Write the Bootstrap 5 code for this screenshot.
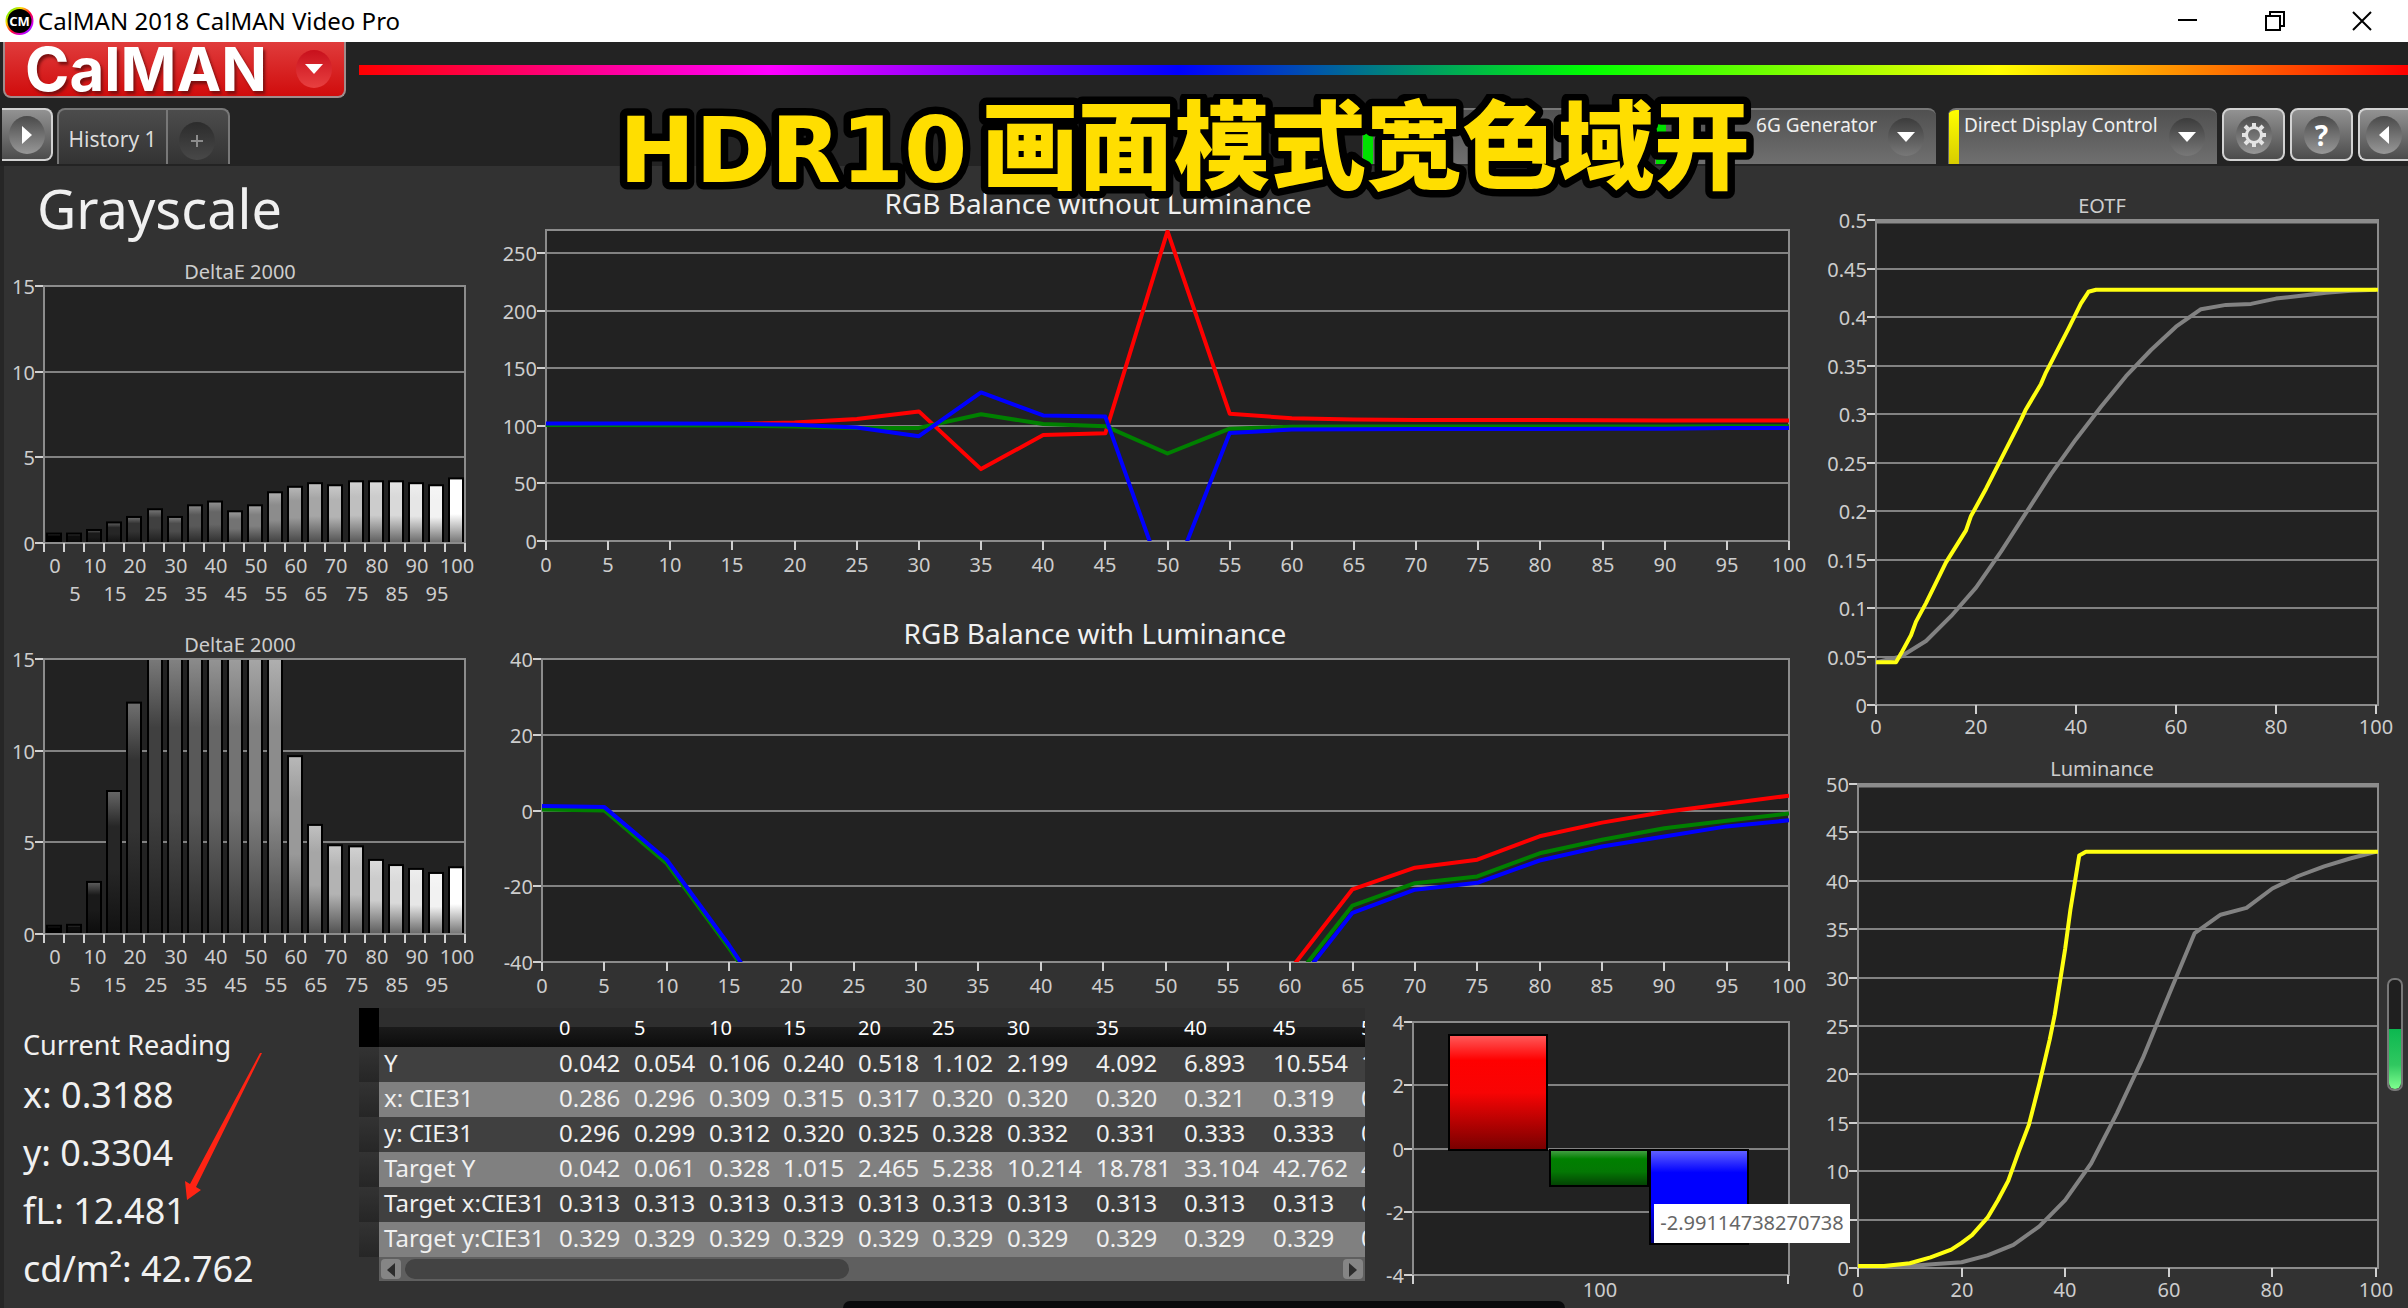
<!DOCTYPE html>
<html lang="en">
<head>
<meta charset="utf-8">
<meta name="viewport" content="width=device-width, initial-scale=1">
<title>CalMAN 2018 CalMAN Video Pro</title>
<link rel="stylesheet" href="https://cdn.jsdelivr.net/npm/bootstrap@5.3.0/dist/css/bootstrap.min.css">
<style>
  body { background: #323232; color: #f0f0f0; font-family: "Noto Sans", "Open Sans", sans-serif; overflow-x: hidden; }
  svg { display: block; }
  .titlebar { height: 42px; background: #fff; color: #000; font-size: 24px; line-height: 42px; padding: 0 3px 0 5px; }
  .titlebar button { width: 87px; height: 42px; border: 0; background: none; padding: 0; }
  .app-head { background: #232323; height: 124px; position: relative; }
  .logo-btn { width: 343px; height: 56px; margin-left: 3px; padding: 0 12px 0 20px; border: 2px solid #a08c8c; border-top: 0; border-radius: 0 0 8px 8px; background: linear-gradient(#e03c3c, #d00c0c); color: #fff; }
  .logo-word { font: 700 60px/50px Inter, sans-serif; text-shadow: 2px 3px 3px #7a1010; }
  .spectrum { height: 10px; margin: 23px 0 0 13px; background: linear-gradient(90deg, #f00, #f0f, #00f, #0f0, #ff0, #f00); }
  .tool-row { margin-top: 10px; }
  .round-ico { width: 36px; height: 38px; border-radius: 50%; background: linear-gradient(#3c3c3c, #787878); flex: none; }
  .logo-btn .round-ico { background: linear-gradient(#c8101c, #e84040); }
  .sq-btn { width: 63px; height: 53px; border: 2px solid #d2d2d2; border-radius: 8px; background: linear-gradient(#929292, #4c4c4c); padding: 0; margin-left: 5px; }
  .sq-btn .round-ico { background: linear-gradient(#4a4a4a, #989898); }
  .edge-l { width: 51px; margin-left: 2px; border-left: 0; border-radius: 0 8px 8px 0; }
  .edge-r { width: 50px; border-right: 0; border-radius: 8px 0 0 8px; }
  .hist { height: 56px; border: 2px solid #787878; border-bottom: 0; border-radius: 8px 8px 0 0; background: linear-gradient(#4c4c4c, #333); margin-left: 4px; color: #dcdcdc; font-size: 21px; }
  .hist button { background: none; border: 0; color: inherit; padding: 0; height: 54px; }
  .hist .tab-name { width: 109px; border-right: 2px solid #787878; padding-top: 6px; }
  .hist .tab-add { width: 60px; padding: 8px 0 0 11px; }
  .tab-add .round-ico { background: linear-gradient(#2c2c2c, #484848); }
  .device { height: 56px; width: 281px; border: 0; border-top: 2px solid #777; border-radius: 8px 8px 0 0; background: linear-gradient(#505050, #707070); color: #f0f0f0; font-size: 19px; line-height: 26px; padding: 2px 12px 0 6px; overflow: hidden; }
  .device + .device { margin-left: 12px; }
  .device::before { content: ""; width: 10px; height: 54px; margin: -2px 5px 0 -5px; background: #00e000; flex: none; }
  .device.direct { width: 269px; }
  .device.direct::before { background: linear-gradient(#ff0, #d8cc00); }
  .device .round-ico { margin: 6px 0 0 11px; }
  .caption { position: absolute; left: 610px; top: 52px; width: 1160px; height: 112px; z-index: 5; pointer-events: none; }
  .cap-text { fill: #ffde00; stroke: #000; stroke-width: 15px; stroke-linejoin: round; paint-order: stroke fill; font-weight: 900; }
  .cap-latin { font-family: "DejaVu Sans", sans-serif; font-size: 91px; }
  .cap-han { font-family: "Noto Sans CJK SC", sans-serif; font-size: 96px; }
  .workspace { display: grid; grid-template-columns: 1820fr 588fr; box-shadow: inset 4px 0 #262626; }
  .upper { display: grid; grid-template-columns: 490fr 1330fr; }
  .lower { display: grid; grid-template-columns: 359fr 1006fr 455fr; }
  .workspace > *, .upper > *, .lower > * { min-width: 0; }
  .workspace svg { width: 100%; height: auto; overflow: visible; }
  .page-name { height: 84px; font-size: 54px; line-height: 84px; padding-left: 37px; font-weight: 400; margin: 0; }
  .readings { padding: 24px 0 0 23px; font-size: 36px; line-height: 58px; position: relative; }
  .readings h2 { font-size: 27px; line-height: 42px; margin: 0; font-weight: 400; }
  .readings svg.pointer { position: absolute; left: 180px; top: 50px; width: 90px; height: 155px; }
  .grid-wrap { margin-top: 8px; overflow: hidden; }
  .cie { table-layout: fixed; width: 1090px; border-collapse: collapse; font-size: 24px; line-height: 32px; white-space: nowrap; }
  .cie th, .cie td { padding: 0 0 3px 5px; font-weight: 400; height: 35px; }
  .cie thead th { height: 39px; padding-bottom: 0; font-size: 20px; background: linear-gradient(#2e2e2e 50%, #1a1a1a 50%, #0c0c0c); color: #fff; }
  .cie tbody tr { background: #404040; }
  .cie tbody tr:nth-child(even) { background: #808080; }
  .cie .sel { background: linear-gradient(#333, #262626); }
  .cie thead .sel { background: #000; }
  .hscroll { height: 24px; margin-left: 20px; background: #5f5f5f; padding: 2px; }
  .hscroll button { width: 20px; height: 20px; border: 0; border-radius: 4px; background: #858585; padding: 4px 6px; }
  .hscroll .thumb { width: 444px; margin-left: 4px; border-radius: 10px; background: #434343; }
  .lbl { fill: #cdcdcd; font-size: 20px; }
  .big { fill: #f0f0f0; font-size: 28px; }
  .val-tip { position: absolute; right: -30px; top: 204px; width: 196px; height: 39px; background: #fff; color: #666; font-size: 20px; line-height: 38px; text-align: center; z-index: 3; }
  .dock { position: absolute; left: 35%; width: 30%; bottom: 0; height: 7px; background: #0a0a0c; border-radius: 8px 8px 0 0; }
</style>
<script src="https://cdn.jsdelivr.net/npm/bootstrap@5.3.0/dist/js/bootstrap.bundle.min.js"></script>
</head>
<body>
<div class="position-relative">
  <header class="titlebar d-flex align-items-center">
    <svg width="29" height="30" viewBox="0 0 29 30" class="me-1" aria-hidden="true">
      <defs><linearGradient id="ring" x1="0" y1="0" x2="1" y2="1"><stop offset="0" stop-color="#0f0"/><stop offset=".3" stop-color="#fd0"/><stop offset=".55" stop-color="#f03"/><stop offset=".8" stop-color="#c0f"/><stop offset="1" stop-color="#04f"/></linearGradient></defs>
      <circle cx="14.500" cy="15" r="14" fill="url(#ring)"/><circle cx="14.500" cy="15" r="12" fill="#000"/>
      <text x="14.500" y="20" text-anchor="middle" font-size="13" font-weight="700" fill="#fff">CM</text>
    </svg>
    <span>CalMAN 2018 CalMAN Video Pro</span>
    <div class="ms-auto d-flex">
      <button aria-label="Minimize"><svg width="20" height="20" class="mx-auto" stroke="#000" stroke-width="2"><path d="M0 9H19"/></svg></button>
      <button aria-label="Restore"><svg width="20" height="20" class="mx-auto" fill="none" stroke="#000" stroke-width="2"><path d="M1 5H15V19H1ZM5 5V1H19V15H15"/></svg></button>
      <button aria-label="Close"><svg width="20" height="20" class="mx-auto" stroke="#000" stroke-width="2"><path d="M1 1L19 19M19 1L1 19"/></svg></button>
    </div>
  </header>

  <div class="app-head">
    <div class="d-flex">
      <button class="logo-btn d-flex align-items-center justify-content-between flex-shrink-0"><span class="logo-word">CalMAN</span>
        <span class="round-ico d-flex align-items-center justify-content-center"><svg width="20" height="12"><path d="M1 1H19L10 11Z" fill="#fff"/></svg></span></button>
      <div class="spectrum flex-grow-1"></div>
    </div>
    <nav class="tool-row d-flex align-items-start">
      <button class="sq-btn edge-l d-flex align-items-center justify-content-center" aria-label="Show panel"><span class="round-ico d-flex align-items-center justify-content-center"><svg width="12" height="20"><path d="M1 1L11 10L1 19Z" fill="#fff"/></svg></span></button>
      <div class="hist d-flex">
        <button class="tab-name">History 1</button>
        <button class="tab-add" aria-label="Add history"><span class="round-ico d-flex align-items-center justify-content-center"><svg width="12" height="12" stroke="#8c8c8c" stroke-width="2"><path d="M6 0V12M0 6H12"/></svg></span></button>
      </div>
      <div class="ms-auto d-flex">
        <button class="device d-flex" aria-label="Meter"></button>
        <button class="device d-flex"><span class="ms-auto">6G Generator</span><span class="round-ico d-flex align-items-center justify-content-center"><svg width="20" height="12"><path d="M1 1H19L10 11Z" fill="#fff"/></svg></span></button>
        <button class="device direct d-flex"><span class="me-auto text-nowrap">Direct Display Control</span><span class="round-ico d-flex align-items-center justify-content-center"><svg width="20" height="12"><path d="M1 1H19L10 11Z" fill="#fff"/></svg></span></button>
        <button class="sq-btn d-flex align-items-center justify-content-center" aria-label="Settings"><span class="round-ico d-flex align-items-center justify-content-center"><svg width="28" height="28" viewBox="-14 -14 28 28" fill="none" stroke="#e4e4e4"><circle r="7.500" stroke-width="3"/><path stroke-width="4" d="M0-8V-12M0 8V12M8 0H12M-8 0H-12M6 6L9 9M-6-6L-9-9M6-6L9-9M-6 6L-9 9"/></svg></span></button>
        <button class="sq-btn d-flex align-items-center justify-content-center" aria-label="Help"><span class="round-ico d-flex align-items-center justify-content-center text-white fw-bold fs-3">?</span></button>
        <button class="sq-btn edge-r d-flex align-items-center justify-content-center" aria-label="Hide panel"><span class="round-ico d-flex align-items-center justify-content-center"><svg width="12" height="20"><path d="M11 1L1 10L11 19Z" fill="#fff"/></svg></span></button>
      </div>
    </nav>
    <svg class="caption" viewBox="610 94 1160 112">
      <text class="cap-text cap-latin" x="619" y="182">HDR10</text>
      <text class="cap-text cap-han" x="982" y="181">画面模式宽色域开</text>
    </svg>
  </div>

  <main class="workspace">
    <section>
      <div class="upper">
        <div>
          <h1 class="page-name">Grayscale</h1>
          <svg id="deA" viewBox="0 250 490 380"></svg>
          <svg id="deB" viewBox="0 630 490 370"></svg>
        </div>
        <div>
          <svg id="rgbA" viewBox="490 166 1330 434"></svg>
          <svg id="rgbB" viewBox="490 600 1330 400"></svg>
        </div>
      </div>
      <div class="lower">
        <div class="readings">
          <h2>Current Reading</h2>
          <div>x: 0.3188</div><div>y: 0.3304</div><div>fL: 12.481</div><div>cd/m²: 42.762</div>
          <svg class="pointer" viewBox="180 1050 90 155"><path d="M262 1053L196 1187L201 1190L187 1200L185 1181L190 1184L260 1053Z" fill="#ff2414"/></svg>
        </div>
        <div>
          <div class="grid-wrap">
            <table class="cie" id="cie"></table>
            <div class="hscroll d-flex">
              <button aria-label="Scroll left"><svg viewBox="0 0 8 14"><path d="M8 0L0 7L8 14Z" fill="#2c2c2c"/></svg></button>
              <div class="thumb"></div>
              <button class="ms-auto" aria-label="Scroll right"><svg viewBox="0 0 8 14"><path d="M0 0L8 7L0 14Z" fill="#2c2c2c"/></svg></button>
            </div>
          </div>
        </div>
        <div class="position-relative">
          <svg id="rgbBars" viewBox="1365 1000 455 308"></svg>
          <div class="val-tip">-2.99114738270738</div>
        </div>
      </div>
    </section>
    <section>
      <svg id="eotf" viewBox="1820 166 588 584"></svg>
      <svg id="lum" viewBox="1820 750 588 558"></svg>
    </section>
  </main>
  <div class="dock"></div>
</div>

<script>
const range = (a, b, s) => { const r = []; for (let v = a; v <= b + s / 1000; v += s) r.push(+v.toFixed(4)); return r; };
const fives = range(0, 100, 5);

// Plot area, grid and y labels; f = {x0,x1,y0,y1 (bottom), min,max, xs (x of 100), bare (value drawn without a label)}
function frame(f) {
  f.px = v => f.x0 + v * ((f.xs || f.x1) - f.x0) / 100;
  f.py = v => f.y1 - (v - f.min) * (f.y1 - f.y0) / (f.max - f.min);
  let s = `<rect x="${f.x0}" y="${f.y0}" width="${f.x1 - f.x0}" height="${f.y1 - f.y0}" fill="#222"/>`;
  if (f.title) s += `<text class="${f.big ? 'big' : 'lbl'}" x="${f.tx}" y="${f.ty}" text-anchor="middle">${f.title}</text>`;
  f.yt.forEach(v => {
    const y = Math.round(f.py(v));
    s += `<path d="M${f.x0} ${y}H${f.x1}" stroke="#828282" stroke-width="2"/><path d="M${f.x0 - 9} ${y}H${f.x0}" stroke="#d0d0d0" stroke-width="2"/>`;
    if (v !== f.bare) s += `<text class="lbl" x="${f.x0 - 9}" y="${y + 8}" text-anchor="end">${v}</text>`;
  });
  return s;
}
const border = f => `<rect x="${f.x0}" y="${f.y0}" width="${f.x1 - f.x0}" height="${f.y1 - f.y0}" fill="none" stroke="#8c8c8c" stroke-width="2"/>`;
const tick = (x, y) => `<path d="M${x} ${y}v9" stroke="#d0d0d0" stroke-width="2"/>`;
const text = (x, y, t) => `<text class="lbl" x="${x}" y="${y}" text-anchor="middle">${t}</text>`;

function deltaE(id, f, vals) {
  let s = frame(f), d = '<defs>';
  vals.forEach((v, i) => {
    const g = Math.round(i * 12.75), hi = Math.round(g + (255 - g) * .3), lo = Math.round(g * .45);
    const x = f.x0 + 3 + Math.round(i * 20.1), y = Math.max(f.py(v), f.y0);
    d += `<linearGradient id="${id}${i}" x2="0" y2="1"><stop offset="0" stop-color="rgb(${hi},${hi},${hi})"/><stop offset=".25" stop-color="rgb(${g},${g},${g})"/><stop offset=".55" stop-color="rgb(${g},${g},${g})"/><stop offset="1" stop-color="rgb(${lo},${lo},${lo})"/></linearGradient>`;
    s += `<rect x="${x}" y="${y}" width="14" height="${f.y1 - y}" fill="url(#${id}${i})" stroke="#000" stroke-width="2"/>`;
    s += text(x + 8, f.y1 + (i % 2 ? 58 : 30), i * 5);
  });
  s += border(f);
  for (let i = 0; i <= 21; i++) s += tick(Math.round(f.x0 + i * (f.x1 - f.x0) / 21), f.y1);
  document.getElementById(id).innerHTML = d + '</defs>' + s;
}
deltaE('deA', {x0: 44, x1: 465, y0: 286, y1: 543, min: 0, max: 15, yt: [0, 5, 10, 15], title: 'DeltaE 2000', tx: 240, ty: 279},
  [.55, .55, .76, 1.2, 1.52, 1.97, 1.52, 2.2, 2.42, 1.85, 2.2, 2.96, 3.28, 3.49, 3.37, 3.6, 3.6, 3.6, 3.49, 3.37, 3.77]);
deltaE('deB', {x0: 44, x1: 465, y0: 659, y1: 934, min: 0, max: 15, yt: [0, 5, 10, 15], title: 'DeltaE 2000', tx: 240, ty: 652},
  [.45, .5, 2.84, 7.8, 12.62, 20, 20, 20, 20, 20, 20, 20, 9.7, 5.95, 4.84, 4.78, 4.04, 3.76, 3.55, 3.33, 3.64]);

function lines(id, f, xt, series, w) {
  let s = frame(f);
  if (f.topRule) s += `<path d="M${f.x0} ${f.y0 + 2}H${f.x1}" stroke="#8c8c8c" stroke-width="3"/>`;
  s += border(f);
  xt.forEach(v => { const x = Math.round(f.px(v)); s += tick(x, f.y1) + text(x, f.y1 + f.xl, v); });
  s += `<clipPath id="${id}c"><rect x="${f.x0}" y="${f.y0}" width="${f.x1 - f.x0}" height="${f.y1 - f.y0}"/></clipPath><g clip-path="url(#${id}c)" fill="none" stroke-linejoin="round" stroke-width="${w}">`;
  series.forEach(([c, pts]) => s += `<polyline stroke="${c}" points="${pts.map(p => f.px(p[0]).toFixed(1) + ',' + f.py(p[1]).toFixed(1)).join(' ')}"/>`);
  document.getElementById(id).innerHTML = s + '</g>' + (f.extra || '');
}
const by5 = (a, start = 0) => a.map((v, i) => [start + i * 5, v]);

lines('rgbA', {x0: 546, x1: 1789, y0: 230, y1: 541, min: 0, max: 270, yt: range(0, 250, 50), xl: 31, big: 1, title: 'RGB Balance without Luminance', tx: 1098, ty: 214}, fives, [
  ['#f00', by5([101, 101, 101, 101.5, 103, 106, 112.5, 62.4, 92, 93.5, 269, 110.5, 106.5, 105.5, 105, 105, 105, 104.8, 104.6, 104.5, 104.5])],
  ['#008000', by5([100.8, 100.7, 100.5, 100.2, 99.5, 98.2, 98.2, 110, 101.5, 99.7, 76, 97.5, 99.2, 99.3, 99.4, 99.5, 99.5, 99.5, 99.5, 99.6, 99.6])],
  ['#00f', by5([102, 102, 102, 101.8, 101, 98.5, 91, 129, 109, 108, -43.7, 93.7, 96.7, 97, 97.2, 97.3, 97.3, 97.5, 97.5, 98, 98])]], 4);
lines('rgbB', {x0: 542, x1: 1789, y0: 659, y1: 962, min: -40, max: 40, yt: range(-40, 40, 20), xl: 31, big: 1, title: 'RGB Balance with Luminance', tx: 1095, ty: 644}, fives, [
  ['#f00', by5([-42, -20.8, -15.1, -13, -6.8, -3.2, -.4, 1.8, 3.9], 60)],
  ['#008000', by5([.3, 0, -14, -36.3, -60])], ['#008000', by5([-46, -25.1, -19.2, -17.4, -11.3, -7.7, -4.7, -2.7, -.8], 60)],
  ['#00f', by5([1.2, .9, -13, -35.5, -60])], ['#00f', by5([-48, -27, -20.9, -19.1, -13.2, -9.5, -6.9, -4.2, -2.6], 60)]], 4);
lines('eotf', {x0: 1876, x1: 2378, xs: 2376, y0: 220, y1: 705, min: 0, max: .5, yt: range(0, .5, .05), xl: 29, topRule: 1, title: 'EOTF', tx: 2102, ty: 213}, range(0, 100, 20), [
  ['#828282', by5([.044, .05, .066, .0915, .121, .158, .198, .238, .274, .3075, .339, .366, .390, .408, .4125, .4135, .419, .422, .425, .427, .428])],
  ['#ff1', [[0, .044], [4, .044], [5, .053], [7, .072], [8, .086], [10, .105], [14, .147], [18, .18], [19, .195], [20, .204], [22, .223], [29, .294], [30, .305], [33, .331], [34, .343], [38.5, .388], [41, .414], [42.5, .426], [44, .428], [101, .428]]]], 4);
lines('lum', {x0: 1858, x1: 2378, xs: 2376, y0: 784, y1: 1268, min: 0, max: 50, yt: range(0, 50, 5), bare: 5, xl: 29, topRule: 1, title: 'Luminance', tx: 2102, ty: 776,
  extra: `<defs><linearGradient id="mtr" x2="0" y2="1"><stop offset="0" stop-color="#0cb850"/><stop offset=".6" stop-color="#30c860"/><stop offset="1" stop-color="#80ff90"/></linearGradient></defs>
   <rect x="2388" y="979" width="14" height="111" rx="6" fill="#1f1f1f" stroke="#787878" stroke-width="2"/><path d="M2389 1029h12v54a6 6 0 0 1-12 0z" fill="url(#mtr)"/>`}, range(0, 100, 20), [
  ['#828282', by5([.1, .1, .2, .4, .6, 1.3, 2.4, 4.3, 7, 10.8, 16, 21.7, 28.2, 34.6, 36.5, 37.2, 39.2, 40.5, 41.5, 42.3, 43])],
  ['#ff1', [[0, .2], [5, .2], [10, .5], [14, 1.1], [18, 1.9], [20, 2.6], [22, 3.4], [25, 5.2], [27, 7], [29, 9], [31, 12], [33, 14.8], [35, 19], [37, 23.6], [38, 26.2], [40, 33], [41, 37], [42, 40.3], [42.7, 42.6], [44, 43], [101, 43]]]], 4);

(function () {
  const f = {x0: 1413, x1: 1789, y0: 1022, y1: 1275, min: -4, max: 4, yt: range(-4, 4, 2)};
  let s = `<defs><linearGradient id="br" x2="0" y2="1"><stop offset="0" stop-color="#ff5c5c"/><stop offset=".22" stop-color="#f00"/><stop offset=".5" stop-color="#f80404"/><stop offset="1" stop-color="#700"/></linearGradient>
   <linearGradient id="bg" x2="0" y2="1"><stop offset="0" stop-color="#4aa04a"/><stop offset=".25" stop-color="#008000"/><stop offset=".6" stop-color="#047804"/><stop offset="1" stop-color="#044004"/></linearGradient>
   <linearGradient id="bb" x2="0" y2="1"><stop offset="0" stop-color="#6464ff"/><stop offset=".24" stop-color="#00f"/><stop offset=".6" stop-color="#00f"/><stop offset="1" stop-color="#000078"/></linearGradient></defs>` + frame(f) + border(f);
  [[1449, 1035, 1150, 'br'], [1550, 1150, 1186, 'bg'], [1650, 1150, 1244, 'bb']].forEach(b =>
    s += `<rect x="${b[0]}" y="${b[1]}" width="98" height="${b[2] - b[1]}" fill="url(#${b[3]})" stroke="#000" stroke-width="2"/>`);
  s += tick(1413, 1275) + tick(1788, 1275) + text(1600, 1297, '100');
  document.getElementById('rgbBars').innerHTML = s;
})();

const rows = {
  'Y': '0.042 0.054 0.106 0.240 0.518 1.102 2.199 4.092 6.893 10.554 15.8',
  'x: CIE31': '0.286 0.296 0.309 0.315 0.317 0.320 0.320 0.320 0.321 0.319 0.3',
  'y: CIE31': '0.296 0.299 0.312 0.320 0.325 0.328 0.332 0.331 0.333 0.333 0.3',
  'Target Y': '0.042 0.061 0.328 1.015 2.465 5.238 10.214 18.781 33.104 42.762 42.7',
  'Target x:CIE31': '0.313 0.313 0.313 0.313 0.313 0.313 0.313 0.313 0.313 0.313 0.313',
  'Target y:CIE31': '0.329 0.329 0.329 0.329 0.329 0.329 0.329 0.329 0.329 0.329 0.329'
};
const widths = [20, 175, 75, 75, 74, 75, 74, 75, 89, 88, 89, 88, 93];
document.getElementById('cie').innerHTML =
  '<colgroup>' + widths.map(w => `<col style="width:${w}px">`).join('') + '</colgroup>' +
  '<thead><tr><th class="sel"></th><th></th>' + range(0, 50, 5).map(v => `<th scope="col">${v}</th>`).join('') + '</tr></thead><tbody>' +
  Object.entries(rows).map(([k, v]) => `<tr><td class="sel"></td><th scope="row">${k}</th>` + v.split(' ').map(c => `<td>${c}</td>`).join('') + '</tr>').join('') + '</tbody>';
</script>
</body>
</html>
